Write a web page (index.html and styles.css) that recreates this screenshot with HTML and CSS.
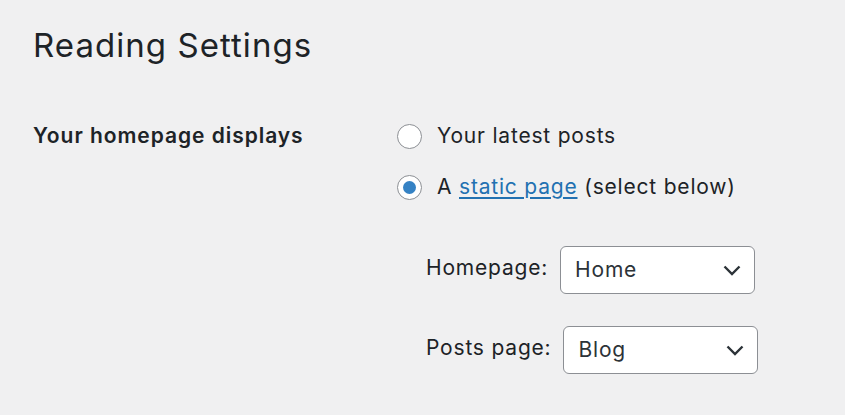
FILE: index.html
```html
<!DOCTYPE html>
<html lang="en">
<head>
<meta charset="utf-8">
<title>Reading Settings</title>
<link rel="stylesheet" href="styles.css">
</head>
<body>
<div class="wrap">
  <h1 class="title">Reading Settings</h1>
  <div class="form-row">
    <div class="row-label">Your homepage displays</div>
    <div class="row-field">
      <label class="radio-line">
        <span class="radio"></span>
        <span>Your latest posts</span>
      </label>
      <label class="radio-line">
        <span class="radio checked"><span class="dot"></span></span>
        <span>A <a href="#" class="link">static page</a> (select below)</span>
      </label>
      <div class="sub-fields">
        <div class="sub-row">
          <span class="sub-label">Homepage:</span>
          <div class="select"><span>Home</span>
            <svg class="chev" width="18" height="11" viewBox="0 0 18 11"><path d="M1.5 1.5 L9 9 L16.5 1.5" fill="none" stroke="#2c3338" stroke-width="2.4"/></svg>
          </div>
        </div>
        <div class="sub-row">
          <span class="sub-label">Posts page:</span>
          <div class="select"><span>Blog</span>
            <svg class="chev" width="18" height="11" viewBox="0 0 18 11"><path d="M1.5 1.5 L9 9 L16.5 1.5" fill="none" stroke="#2c3338" stroke-width="2.4"/></svg>
          </div>
        </div>
      </div>
    </div>
  </div>
</div>
</body>
</html>
```
FILE: styles.css
```css
html, body {
  margin: 0;
  padding: 0;
  background: #f0f0f1;
}
body {
  font-family: Inter, "Noto Sans", "Liberation Sans", sans-serif;
  color: #1d2327;
  letter-spacing: 0.8px;
}
.wrap {
  padding: 24px 33px 0 33px;
}
.title {
  margin: 0;
  font-size: 33px;
  font-weight: 400;
  line-height: 43px;
  letter-spacing: 1.05px;
}
.form-row {
  margin-top: 53px;
  display: grid;
  grid-template-columns: 364px 1fr;
}
.row-label {
  font-size: 21px;
  font-weight: 600;
  line-height: 32px;
  letter-spacing: 0.95px;
}
.row-field {
  display: flex;
  flex-direction: column;
  gap: 19px;
  font-size: 21px;
  line-height: 32px;
}
.radio-line {
  display: flex;
  align-items: center;
  gap: 15px;
  height: 32px;
}
.radio {
  box-sizing: border-box;
  width: 25px;
  height: 25px;
  border: 1.5px solid #8c8f94;
  border-radius: 50%;
  background: #fff;
  display: flex;
  align-items: center;
  justify-content: center;
  flex: none;
}
.dot {
  width: 13px;
  height: 13px;
  border-radius: 50%;
  background: #3582c4;
}
.link {
  color: #2271b1;
  text-decoration: underline;
  text-underline-offset: 3px;
  text-decoration-thickness: 1.5px;
}
.sub-fields {
  margin-top: 24px;
  padding-left: 29px;
  display: flex;
  flex-direction: column;
  gap: 32px;
}
.sub-row {
  display: flex;
  align-items: center;
  gap: 12px;
}
.sub-label {
  font-size: 21px;
  line-height: 32px;
  position: relative;
  top: -2px;
}
.select {
  box-sizing: border-box;
  width: 195px;
  height: 48px;
  border: 1.5px solid #8c8f94;
  border-radius: 6px;
  background: #fff;
  display: flex;
  align-items: center;
  justify-content: space-between;
  padding: 0 13px 0 14px;
  font-size: 21px;
  color: #2c3338;
}
.chev {
  display: block;
}
```
